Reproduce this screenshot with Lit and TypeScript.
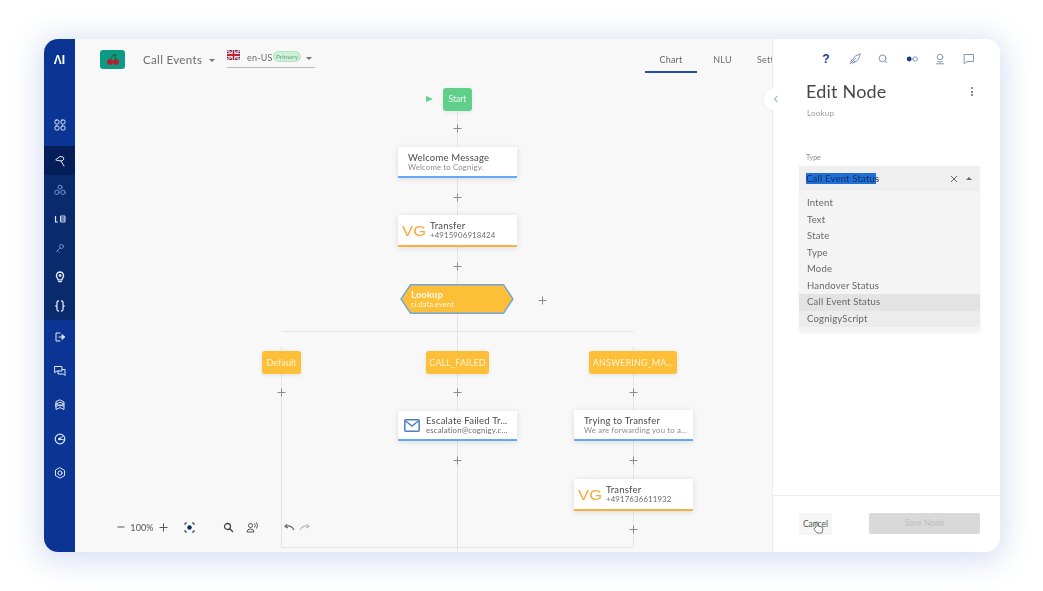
import { LitElement, html, css, svg } from "lit";
import { customElement } from "lit/decorators.js";

const OX = 75;
const OY = 39;

const plusses = [[457,128],[457,197],[457,266],[542,300],[281,392],[457,392],[633,392],[457,460],[633,460],[633,529]];
const tags = [
  { x: 262, w: 39, t: "Default" },
  { x: 426, w: 63, t: "CALL_FAILED" },
  { x: 589, w: 88, t: "ANSWERING_MA..." },
];
const cards = [
  { x: 398, y: 147, h: 31, title: "Welcome Message", sub: "Welcome to Cognigy.", kind: "say" },
  { x: 398, y: 215, h: 32, title: "Transfer", sub: "+4915906918424", kind: "vg" },
  { x: 398, y: 411, h: 30, title: "Escalate Failed Tr...", sub: "escalation@cognigy.c...", kind: "mail" },
  { x: 574, y: 410, h: 31, title: "Trying to Transfer", sub: "We are forwarding you to a...", kind: "say" },
  { x: 574, y: 479, h: 32, title: "Transfer", sub: "+4917636611932", kind: "vg" },
];
const options = ["Intent", "Text", "State", "Type", "Mode", "Handover Status", "Call Event Status", "CognigyScript"];

const ic = (body: unknown, size = 12) => html`<svg class="ico" width=${size} height=${size} viewBox="0 0 12 12" fill="none" stroke="currentColor" stroke-width="1" stroke-linecap="round" stroke-linejoin="round">${body}</svg>`;

const icons: Record<string, unknown> = {
  grid: svg`<rect x="1" y="1" width="4" height="4" rx="1.2"/><rect x="7" y="1" width="4" height="4" rx="1.2"/><rect x="1" y="7" width="4" height="4" rx="1.2"/><rect x="7" y="7" width="4" height="4" rx="1.2"/>`,
  flow: svg`<path d="M2 4.5 L6 1.5 Q9.5 1 10 4 L8 6 L3.5 5.5 Z"/><path d="M7 6 L10 11"/>`,
  nodes: svg`<circle cx="6" cy="3.2" r="2"/><circle cx="3" cy="8.3" r="2.2"/><circle cx="9" cy="8.3" r="2.2"/>`,
  pin: svg`<circle cx="7.5" cy="4.5" r="2"/><path d="M6 6 L2.5 9.5"/><path d="M4 9.5 L5 10.5"/>`,
  bulb: svg`<path d="M6 1 a3.6 3.6 0 0 1 2.2 6.4 V8.8 H3.8 V7.4 A3.6 3.6 0 0 1 6 1 Z" stroke-width="1.3"/><circle cx="6" cy="4.6" r="1" fill="currentColor"/><path d="M4.5 10.6 H7.5" stroke-width="1.2"/>`,
  code: svg`<path d="M4.5 1 Q3 1 3 2.5 V4.8 Q3 6 1.8 6 Q3 6 3 7.2 V9.5 Q3 11 4.5 11" stroke-width="1.3"/><path d="M7.5 1 Q9 1 9 2.5 V4.8 Q9 6 10.2 6 Q9 6 9 7.2 V9.5 Q9 11 7.5 11" stroke-width="1.3"/>`,
  exit: svg`<path d="M6 2 H2 V10 H6"/><path d="M5 6 H10.5"/><path d="M8.3 3.8 L10.7 6 L8.3 8.2 Z" fill="currentColor"/>`,
  chat: svg`<path d="M1 1.5 H8 V6 H3 L1 7.5 Z" transform="translate(0 0)"/><path d="M4 6 V9 H9.5 L11 10.5 V4.5 H8"/>`,
  layers: svg`<path d="M6 1 L10 3 V5 L6 3.2 L2 5 V3 Z"/><path d="M2 5 L6 7 L10 5 V7.4 L6 5.8 L2 7.4 Z"/><path d="M2 7.4 V10.5 L6 8.6 L10 10.5 V7.4"/>`,
  gauge: svg`<circle cx="6" cy="6" r="4.8" stroke-width="1.2"/><path d="M5 6 L8.5 3.6 M5 6 L10.5 7" /><circle cx="5.3" cy="6" r=".9" fill="currentColor"/>`,
  gear: svg`<path d="M6 .8 L10.5 3.4 V8.6 L6 11.2 L1.5 8.6 V3.4 Z"/><circle cx="6" cy="6" r="2.1"/>`,
};

@customElement("app-root")
export class AppRoot extends LitElement {
  static styles = css`
    :host { display: block; width: 1043px; height: 591px; background: #fff; overflow: hidden; font-family: "Lato", "Noto Sans", sans-serif; }
    * { box-sizing: border-box; }
    .page { width: 1043px; height: 591px; padding: 39px 44px; }
    .window { width: 955px; height: 513px; display: flex; border-radius: 14px; box-shadow: 0 4px 28px 6px rgba(95,125,205,.24); filter: blur(.4px); background: #fff; }
    .ico { display: block; }

    .side { width: 31px; flex: none; background: #0a3594; border-radius: 14px 0 0 14px; display: flex; flex-direction: column; overflow: hidden; color: #dfe7f7; }
    .brand { height: 41px; display: flex; align-items: center; justify-content: center; font: 700 12px "Liberation Sans", sans-serif; color: #fff; letter-spacing: 0; }
    .top { height: 66px; display: flex; align-items: flex-end; justify-content: center; padding-bottom: 15px; }
    .mid { background: #0a2a6e; }
    .item { height: 29px; display: flex; align-items: center; justify-content: center; }
    .item.on { background: #051e58; height: 29px; }
    .dim { color: #6f8fd0; }
    .bot { display: flex; flex-direction: column; align-items: center; padding-top: 11px; gap: 22px; }

    .canvas { width: 697px; flex: none; background: #f8f8f8; position: relative; overflow: hidden; }
    .header { height: 40px; padding: 11px 0 0 25px; display: flex; align-items: flex-start; color: #6c6c6c; }
    .logo { width: 25px; height: 19px; background: #0f9a83; border-radius: 3px; display: flex; align-items: center; justify-content: center; }
    .proj { margin-left: 18px; width: 66px; font-size: 11.5px; line-height: 19px; letter-spacing: .35px; color: #6d6d6d; }
    .caret { width: 0; height: 0; border: 3px solid transparent; border-top: 3.5px solid #777; border-bottom: 0; flex: none; }
    .c1 { margin-top: 9px; }
    .lang { margin-left: 12px; width: 88px; height: 18px; border-bottom: 1px solid #bbb; display: flex; align-items: flex-start; }
    .lang .code { margin-left: 7px; font-size: 9px; line-height: 15px; letter-spacing: .2px; width: 26px; color: #6d6d6d; }
    .pill { width: 28px; height: 11px; border-radius: 6px; background: #cdf0d8; border: 1px solid #b4e3c2; color: #6aa580; font-size: 6.5px; line-height: 9px; text-align: center; margin-top: 1px; }
    .lang .caret { margin: 7px 0 0 5px; }
    .tabs { position: absolute; left: 570px; top: 11px; display: flex; height: 23px; }
    .tab { width: 52px; text-align: center; font-size: 9px; line-height: 19px; color: #6f6f6f; letter-spacing: .2px; margin-right: 0; white-space: nowrap; }
    .tab.on { border-bottom: 2px solid #2a4ea6; height: 23px; color: #666; }
    .tab.t2 { width: 51px; margin-left: 0; }
    .tab.t3 { width: 40px; text-align: left; padding-left: 9px; }

    .wires { position: absolute; inset: 0; }
    .plus { position: absolute; width: 9px; height: 9px; margin: -4.5px 0 0 -4.5px; background: #f8f8f8; color: #8a8a8a; }
    .start { position: absolute; left: 368px; top: 49px; width: 29px; height: 23px; background: #5ed08a; border-radius: 3px; color: #f1fbf5; font-size: 8.5px; line-height: 23px; text-align: center; box-shadow: 0 1px 4px rgba(0,0,0,.08); }
    .play { position: absolute; left: 351px; top: 57px; width: 0; height: 0; border-left: 7px solid #5ed08a; border-top: 3.5px solid transparent; border-bottom: 3.5px solid transparent; }
    .tag { position: absolute; top: 312px; height: 23px; background: #fdbf38; border-radius: 3px; color: #fff3d6; font-size: 9px; line-height: 23px; text-align: center; white-space: nowrap; box-shadow: 0 1px 4px rgba(0,0,0,.1); letter-spacing: .1px; }
    .card { position: absolute; width: 119px; background: #fff; box-shadow: 0 1px 6px rgba(0,0,0,.12); display: flex; align-items: center; border-bottom: 2px solid #62a8f5; color: #444; }
    .card.vg { border-bottom-color: #f6b142; }
    .card.say .txt { padding-left: 10px; }
    .card.mail .txt { padding-left: 6px; }
    .card.vg .txt { padding-left: 4px; }
    .txt { white-space: nowrap; min-width: 0; }
    .title { font-size: 9.5px; line-height: 11px; letter-spacing: .2px; color: #4a4a4a; }
    .sub { font-size: 7.8px; line-height: 9px; letter-spacing: .15px; color: #8d8d8d; }
    .vg .sub, .mail .sub { color: #6d6d6d; }
    .vglogo { width: 24px; margin-left: 4px; font: 400 15px "Liberation Sans", sans-serif; color: #f3a93c; letter-spacing: .2px; transform: scaleX(1.1); transform-origin: left center; }
    .mailicon { margin-left: 6px; color: #4f7fbd; flex: none; }
    .hex { position: absolute; left: 325px; top: 245px; width: 114px; height: 30px; }
    .hex svg { position: absolute; inset: 0; }
    .hex .label { position: absolute; left: 11px; top: 5px; color: #fff8e8; }
    .hex .name { font-size: 9.5px; line-height: 11px; font-weight: 700; letter-spacing: .1px; }
    .hex .ev { font-size: 7.5px; line-height: 9px; letter-spacing: .1px; }

    .tools { position: absolute; left: 42px; top: 481px; display: flex; align-items: center; height: 14px; color: #555; }
    .zoomv { font-size: 9px; color: #555; width: 26px; text-align: center; letter-spacing: .1px; }
    .tools .g1 { margin-left: 4px; }
    .tools .g2 { margin-left: 16px; color: #333; }
    .tools .g3 { margin-left: 28px; color: #444; }
    .tools .g4 { margin-left: 12px; color: #555; }
    .tools .g5 { margin-left: 25px; color: #666; }
    .tools .g6 { margin-left: 4px; color: #bbb; }

    .panel { width: 228px; flex: none; background: #fff; border-left: 1px solid #ececec; border-radius: 0 14px 14px 0; display: flex; flex-direction: column; position: relative; }
    .collapse { position: absolute; left: -9px; top: 49px; width: 22px; height: 22px; border-radius: 50%; background: #fff; color: #7f93bd; display: flex; align-items: center; justify-content: center; padding-left: 1px; box-shadow: -1px 0 3px rgba(0,0,0,.04); }
    .topicons { height: 42px; padding: 14px 25px 0 47px; display: flex; justify-content: space-between; align-items: flex-start; color: #8195bd; }
    .q { width: 12px; text-align: center; font: 700 12px/13px "Liberation Sans", sans-serif; color: #1b3a8c; }
    .edit { padding: 0 27px 0 33px; display: flex; justify-content: space-between; align-items: center; height: 21px; }
    .edit h1 { margin: 0; font-size: 18px; font-weight: 400; color: #484848; line-height: 21px; letter-spacing: .2px; }
    .dots { display: flex; flex-direction: column; gap: 1.5px; }
    .dots i { width: 2px; height: 2px; border-radius: 50%; background: #666; display: block; }
    .sublabel { margin: 6px 0 0 34px; font-size: 8px; line-height: 10px; color: #9a9a9a; letter-spacing: .2px; }
    .typelabel { margin: 35px 0 0 33px; font-size: 7px; line-height: 9px; color: #8a8a8a; }
    .select { margin: 4px 20px 0 26px; height: 25px; background: #efefef; display: flex; align-items: center; padding: 0 8px 0 7px; color: #666; }
    .sel { background: #1f6fd6; color: #0f2c58; font-size: 9.5px; line-height: 11px; width: 70px; white-space: nowrap; letter-spacing: .2px; }
    .sp { flex: 1; }
    .up { width: 0; height: 0; border: 3px solid transparent; border-bottom: 3px solid #666; border-top: 0; margin-left: 8px; }
    .list { margin: 0 20px 0 26px; height: 141px; background: #f4f4f4; padding-top: 4px; box-shadow: 0 2px 4px rgba(0,0,0,.04); }
    .opt { height: 16.5px; padding-left: 8px; font-size: 9.5px; line-height: 16.5px; color: #666; letter-spacing: .2px; }
    .opt.act { background: #e3e3e3; }
    .opt.next { background: #ececec; }
    .sp2 { flex: 1; }
    .foot { height: 57px; border-top: 1px solid #eee; display: flex; justify-content: space-between; padding: 17px 20px 0 26px; position: relative; }
    .cancel { width: 33px; height: 22px; background: #f6f6f6; border-radius: 2px; font-size: 8.5px; line-height: 22px; text-align: center; color: #555; }
    .save { width: 111px; height: 21px; background: #d9d9d9; border-radius: 2px; font-size: 8.5px; line-height: 21px; text-align: center; color: #bdbdbd; }
    .hand { position: absolute; left: 40px; top: 25px; }
  `;

  private flag() {
    return html`<svg width="13" height="10" viewBox="0 0 13 10" style="flex:none"><rect width="13" height="10" fill="#27306e"/><path d="M0 0L13 10M13 0L0 10" stroke="#fff" stroke-width="2"/><path d="M0 0L13 10M13 0L0 10" stroke="#c8202f" stroke-width=".8"/><path d="M6.5 0V10M0 5H13" stroke="#fff" stroke-width="3.4"/><path d="M6.5 0V10M0 5H13" stroke="#c8202f" stroke-width="1.8"/></svg>`;
  }

  private cardView(c: typeof cards[number]) {
    return html`<div class="card ${c.kind}" style="left:${c.x - OX}px;top:${c.y - OY}px;height:${c.h}px">
      ${c.kind === "vg" ? html`<div class="vglogo">VG</div>` : ""}
      ${c.kind === "mail" ? html`<svg class="mailicon" width="16" height="13" viewBox="0 0 16 13" fill="none" stroke="currentColor" stroke-width="1.5"><rect x=".8" y=".8" width="14.4" height="11.4" rx="1"/><path d="M1 1.5L8 7L15 1.5"/></svg>` : ""}
      <div class="txt"><div class="title">${c.title}</div><div class="sub">${c.sub}</div></div>
    </div>`;
  }

  render() {
    return html`<div class="page"><div class="window">
      <nav class="side">
        <div class="brand">ΛI</div>
        <div class="top">${ic(icons.grid)}</div>
        <div class="mid">
          <div class="item on">${ic(icons.flow)}</div>
          <div class="item dim">${ic(icons.nodes)}</div>
          <div class="item"><svg width="12" height="12" viewBox="0 0 12 12" fill="none" stroke="currentColor"><path d="M1.5 3V9H4" stroke-width="1.2"/><path d="M6.5 3H11V9H6.5ZM6.5 5H11M6.5 7H11" stroke-width=".9"/></svg></div>
          <div class="item dim">${ic(icons.pin)}</div>
          <div class="item">${ic(icons.bulb)}</div>
          <div class="item">${ic(icons.code)}</div>
        </div>
        <div class="bot">
          ${ic(icons.exit)}${ic(icons.chat)}${ic(icons.layers)}${ic(icons.gauge)}${ic(icons.gear)}
        </div>
      </nav>

      <main class="canvas">
        <svg class="wires" width="697" height="513" fill="none" stroke="#e4e4e4" stroke-width="1">
          <path d="M382.5 60V513"/>
          <path d="M206.5 308V508.5H558.5V308"/>
          <path d="M206.5 292.5H558.5"/>
        </svg>
        <header class="header">
          <div class="logo"><svg width="14" height="13" viewBox="0 0 14 13" fill="none"><path d="M4 7L7.5 1.5L10 7" stroke="#14663f" stroke-width="1"/><path d="M7.5 1.5Q10 1 11 3L7.5 2" fill="#1f7a3d" stroke="#14663f" stroke-width=".6"/><circle cx="4" cy="9" r="3" fill="#b3202c"/><circle cx="10" cy="9" r="3" fill="#b3202c"/></svg></div>
          <div class="proj">Call Events</div>
          <div class="caret c1"></div>
          <div class="lang">${this.flag()}<span class="code">en-US</span><span class="pill">Primary</span><span class="caret"></span></div>
        </header>
        <div class="tabs">
          <div class="tab on">Chart</div><div class="tab t2">NLU</div><div class="tab t3">Settings</div>
        </div>

        <div class="play"></div>
        <div class="start">Start</div>
        ${cards.map((c) => this.cardView(c))}
        <div class="hex">
          <svg width="114" height="30" viewBox="0 0 114 30"><polygon points="10.5,.75 103.5,.75 113,15 103.5,29.25 10.5,29.25 1,15" fill="#fdbf38" stroke="#6fa5dc" stroke-width="1.4"/></svg>
          <div class="label"><div class="name">Lookup</div><div class="ev">ci.data.event</div></div>
        </div>
        ${tags.map((t) => html`<div class="tag" style="left:${t.x - OX}px;width:${t.w}px">${t.t}</div>`)}
        ${plusses.map(([x, y]) => html`<svg class="plus" style="left:${x - OX + 0.5}px;top:${y - OY}px" viewBox="0 0 9 9" stroke="currentColor" fill="none"><path d="M4.5 .5V8.5M.5 4.5H8.5"/></svg>`)}

        <div class="tools">
          <svg width="8" height="8" viewBox="0 0 8 8" stroke="currentColor"><path d="M.5 4H7.5"/></svg>
          <span class="zoomv g1">100%</span>
          <svg class="g1" width="9" height="9" viewBox="0 0 9 9" stroke="currentColor"><path d="M4.5 .5V8.5M.5 4.5H8.5"/></svg>
          <svg class="g2" width="11" height="11" viewBox="0 0 11 11" fill="none" stroke="currentColor"><path d="M1 3V1H3M8 1H10V3M10 8V10H8M3 10H1V8"/><circle cx="5.5" cy="5.5" r="2.2" fill="#0e2a66" stroke="none"/></svg>
          <svg class="g3" width="11" height="11" viewBox="0 0 11 11" fill="none" stroke="currentColor" stroke-width="1.3"><circle cx="4.5" cy="4.5" r="3"/><path d="M6.8 6.8L10 10"/></svg>
          <svg class="g4" width="13" height="11" viewBox="0 0 13 11" fill="none" stroke="currentColor"><circle cx="4.5" cy="3.5" r="2"/><path d="M1 10Q1 7 4.5 7T8 10Z"/><path d="M8.5 1.5Q10 3.5 8.5 5.5M10.5 .5Q12.5 3.5 10.5 6.5"/></svg>
          <svg class="g5" width="11" height="9" viewBox="0 0 11 9" fill="none" stroke="currentColor" stroke-width="1.2"><path d="M3 1L1 3.5L4 5"/><path d="M1 3.5Q7 1.5 10 7"/></svg>
          <svg class="g6" width="11" height="9" viewBox="0 0 11 9" fill="none" stroke="currentColor" stroke-width="1.2"><path d="M8 1L10 3.5L7 5"/><path d="M10 3.5Q4 1.5 1 7"/></svg>
        </div>
      </main>

      <aside class="panel">
        <div class="collapse"><svg width="6" height="8" viewBox="0 0 6 8" fill="none" stroke="currentColor" stroke-width="1"><path d="M4.5 .8L1.5 4L4.5 7.2"/></svg></div>
        <div class="topicons">
          <span class="q">?</span>
          ${ic(svg`<path d="M11 1 Q10.5 7 6 9 L3.5 6.5 Q5.5 2 11 1 Z"/><path d="M1 11 L6.5 5.5"/><path d="M3 6.5 L1.8 9 M6 9 L3.4 10.2"/>`)}
          ${ic(svg`<circle cx="5.6" cy="5.4" r="3.4"/><path d="M8.2 8 L9.8 9.6"/>`)}
          <svg width="12" height="12" viewBox="0 0 12 12" fill="none"><circle cx="3.2" cy="6" r="2.4" fill="#1b3a8c"/><circle cx="9.2" cy="6" r="2.2" stroke="#7f93bd"/><path d="M5 6H7" stroke="#7f93bd"/></svg>
          ${ic(svg`<circle cx="6" cy="4" r="2.8"/><path d="M2.5 10.8H9.5M3.5 8.5Q6 10 8.5 8.5"/>`)}
          ${ic(svg`<path d="M1.5 1.5H10.5V8.5H4L1.5 10.5Z"/>`)}
        </div>
        <div class="edit"><h1>Edit Node</h1><div class="dots"><i></i><i></i><i></i></div></div>
        <div class="sublabel">Lookup</div>
        <div class="typelabel">Type</div>
        <div class="select">
          <span class="sel">Call Event Status</span><span class="sp"></span>
          <svg width="8" height="8" viewBox="0 0 8 8" stroke="currentColor" fill="none"><path d="M1 1L7 7M7 1L1 7"/></svg>
          <span class="up"></span>
        </div>
        <div class="list">
          ${options.map((o, i) => html`<div class="opt ${i === 6 ? "act" : i === 7 ? "next" : ""}">${o}</div>`)}
        </div>
        <div class="sp2"></div>
        <div class="foot">
          <div class="cancel">Cancel</div>
          <div class="save">Save Node</div>
          <svg class="hand" width="11" height="13" viewBox="0 0 11 13" fill="#fff" stroke="#555" stroke-width=".8"><path d="M3 6V1.5Q3.9 .4 4.8 1.5V5L9 6Q10 6.5 9.8 8L9 12H4L1.2 8.5Q.8 7 2 7Z"/></svg>
        </div>
      </aside>
    </div></div>`;
  }
}
